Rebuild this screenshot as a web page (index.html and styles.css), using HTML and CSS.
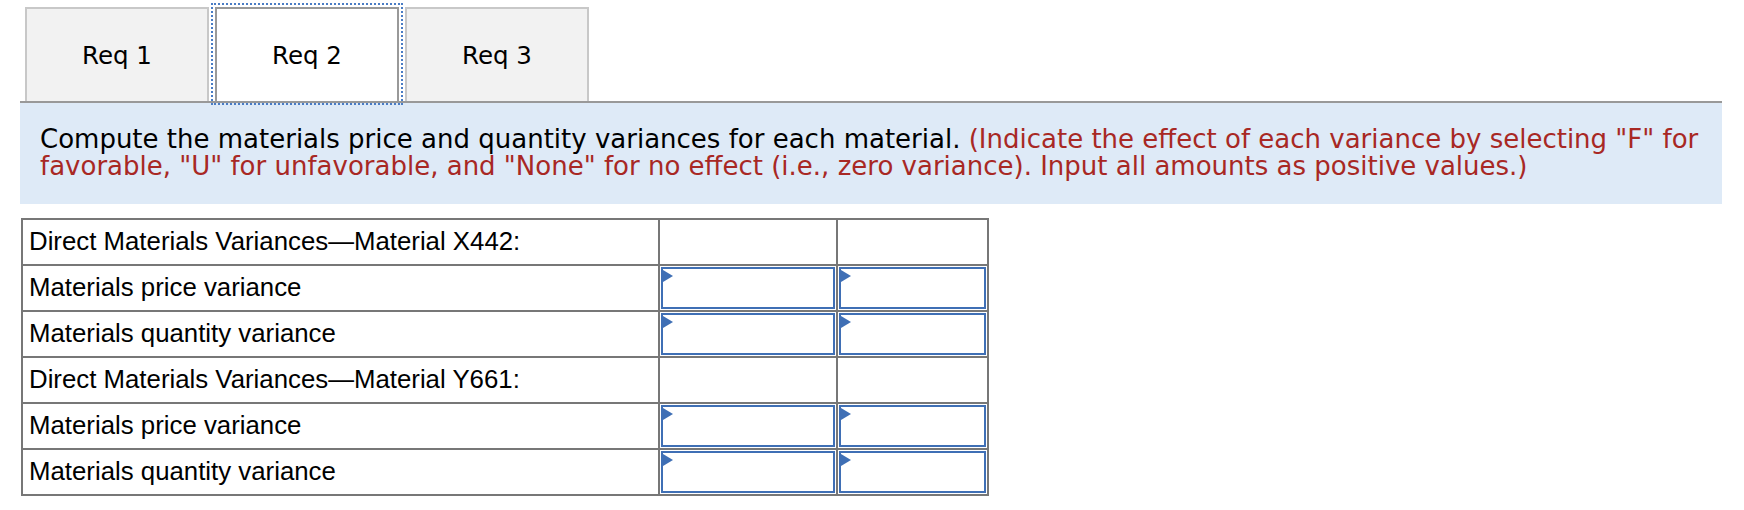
FILE: index.html
```html
<!DOCTYPE html>
<html lang="en">
<head>
    <meta charset="UTF-8" />
    <meta name="viewport" content="width=device-width, initial-scale=1" />
    <title>Req 2 - Materials Variances</title>
    <link rel="stylesheet" href="styles.css">
</head>
<body>

    <div class="panel">
        <div class="tabs" role="tablist">
            <button class="tab" role="tab">Req 1</button>
            <button class="tab active" role="tab" aria-selected="true">Req 2</button>
            <button class="tab" role="tab">Req 3</button>
        </div>

        <p class="instructions">Compute the materials price and quantity variances for each material. <span class="note">(Indicate the effect of each variance by selecting "F" for favorable, "U" for unfavorable, and "None" for no effect (i.e., zero variance). Input all amounts as positive values.)</span></p>
    </div>

    <table class="variances">
        <tr>
            <td class="label">Direct Materials Variances&mdash;Material X442:</td>
            <td class="amount"></td>
            <td class="effect"></td>
        </tr>
        <tr>
            <td class="label">Materials price variance</td>
            <td class="amount"><div class="field"></div></td>
            <td class="effect"><div class="field"></div></td>
        </tr>
        <tr>
            <td class="label">Materials quantity variance</td>
            <td class="amount"><div class="field"></div></td>
            <td class="effect"><div class="field"></div></td>
        </tr>
        <tr>
            <td class="label">Direct Materials Variances&mdash;Material Y661:</td>
            <td class="amount"></td>
            <td class="effect"></td>
        </tr>
        <tr>
            <td class="label">Materials price variance</td>
            <td class="amount"><div class="field"></div></td>
            <td class="effect"><div class="field"></div></td>
        </tr>
        <tr>
            <td class="label">Materials quantity variance</td>
            <td class="amount"><div class="field"></div></td>
            <td class="effect"><div class="field"></div></td>
        </tr>
    </table>

</body>
</html>
```

FILE: styles.css
```css
body {
    margin: 0;
    font-family: "DejaVu Sans", Verdana, sans-serif;
    color: #000;
    background: #fff;
}
.panel {
    width: 1702px;
    margin: 0 0 0 20px;
    padding-top: 7px;
}
.tabs {
    display: flex;
    gap: 6px;
    padding-left: 5px;
    border-bottom: 2px solid #999;
}
.tab {
    width: 184px;
    height: 94px;
    margin: 0;
    padding: 0;
    font-family: inherit;
    font-size: 24.5px;
    color: #000;
    background: #f2f2f2;
    border: 2px solid #c8c8c8;
    border-bottom: none;
    cursor: pointer;
}
.tab.active {
    background: #fff;
    border-color: #999;
    outline: 2px dotted #4a7cc4;
    outline-offset: 2px;
}
.instructions {
    margin: 0;
    background: #deeaf7;
    padding: 23px 8px 0 20px;
    font-size: 26px;
    line-height: 27px;
    height: 78px;
}
.note {
    color: #a82824;
}
.variances {
    border-collapse: collapse;
    margin: 14px 0 0 21px;
    font-family: "Liberation Sans", Arial, sans-serif;
    font-size: 25.8px;
}
.variances td {
    border: 2px solid #777;
    height: 43.8px;
    padding: 0;
}
.label {
    width: 623px;
    padding: 0 6px !important;
}
.amount {
    width: 176px;
}
.effect {
    width: 149px;
}
.field {
    position: relative;
    height: 38px;
    margin: 1px;
    border: 2px solid #3f6fb5;
}
.field::before {
    content: "";
    position: absolute;
    top: 1px;
    left: 0;
    border-top: 6px solid transparent;
    border-bottom: 6px solid transparent;
    border-left: 10px solid #3f6fb5;
}
```
